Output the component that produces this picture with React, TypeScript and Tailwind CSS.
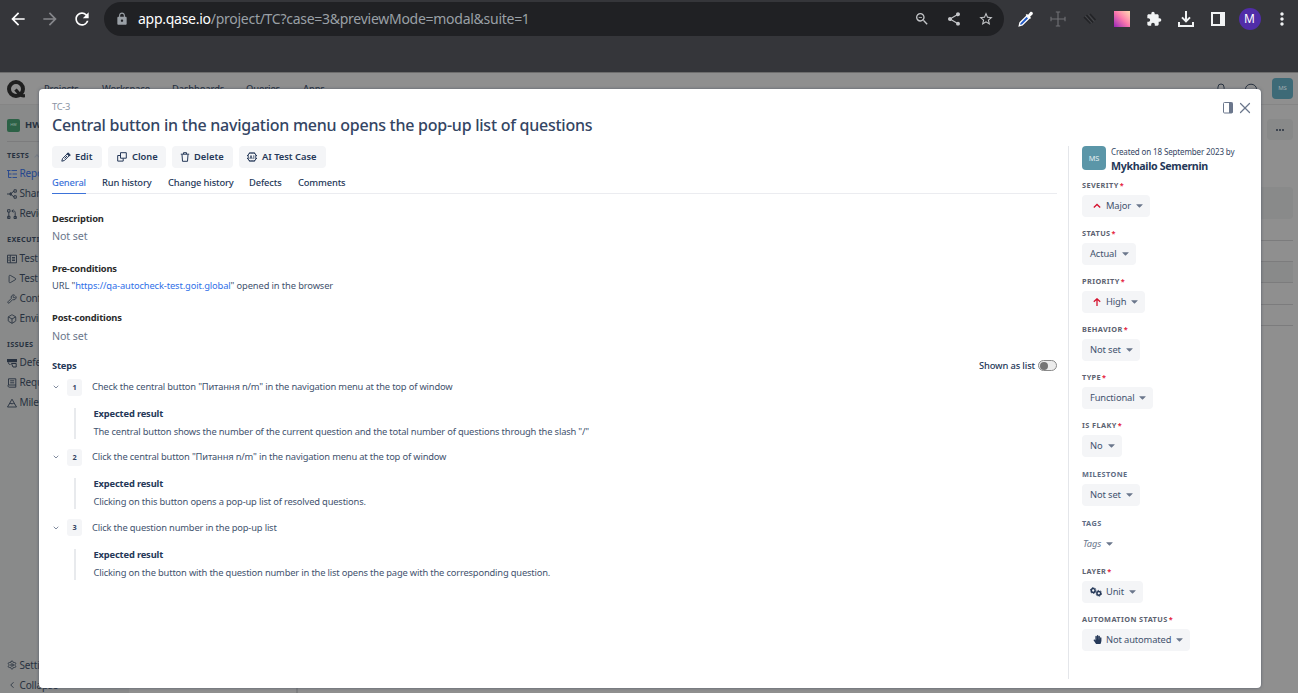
import React from "react";
import {
  MdArrowBack,
  MdArrowForward,
  MdRefresh,
  MdLock,
  MdZoomOut,
  MdShare,
  MdStarBorder,
  MdExtension,
  MdMoreVert,
} from "react-icons/md";
import { FaHandPaper, FaCaretDown } from "react-icons/fa";
import {
  Bell,
  Box,
  ChevronDown,
  ChevronLeft,
  Play,
  Settings,
  Wrench,
  X,
} from "lucide-react";

function BrowserBar() {
  return (
    <div className="flex h-[72px] items-start bg-[#35363a] pr-[5px] pl-2">
      <div className="flex h-[38px] w-[96px] shrink-0 items-center gap-3 text-white">
        <MdArrowBack className="size-5" />
        <MdArrowForward className="size-5 text-[#85868a]" />
        <MdRefresh className="size-5" />
      </div>
      <div className="mt-0.5 flex h-[34px] w-[900px] shrink-0 items-center rounded-full bg-[#202124] pr-2.5 pl-[11px] text-[#9aa0a6]">
        <MdLock className="size-3.5" />
        <span className="ml-[9px] text-[14px] leading-5 tracking-[-0.27px] whitespace-nowrap">
          <span className="text-white">app.qase.io</span>/project/TC?case=3&amp;previewMode=modal&amp;suite=1
        </span>
        <div className="ml-auto flex items-center gap-4 text-[#c4c6c9]">
          <MdZoomOut className="size-4" />
          <MdShare className="size-4" />
          <MdStarBorder className="size-4" />
        </div>
      </div>
      <div className="flex h-[38px] flex-1 items-center pl-[13px] text-[#f1f3f4]">
        <svg viewBox="0 0 18 18" className="size-[18px]">
          <path d="M2.2 15.8 3 12.7 9.6 6.1l2.3 2.3-6.6 6.6z" fill="#1d56c4" stroke="#fff" strokeWidth="1.3" />
          <path d="m8.6 4.9 1.2-1 1.3.9 2.2-2.7c1.3-1 3.2.6 2.4 2.1l-2.6 2.5.9 1.2-1.1 1.2z" fill="#fff" />
        </svg>
        <svg viewBox="0 0 16 16" className="ml-[14.5px] size-4" fill="none" stroke="#707175" strokeWidth="1.1">
          <path d="M8 1v14M1 8h14M5.8 1h4.4M5.8 15h4.4M1 5.8v4.4M15 5.8v4.4M6 8h4" />
        </svg>
        <svg viewBox="0 0 16 16" className="ml-4 size-4" fill="none" strokeWidth="1.5">
          <path d="m2 6 6.5 6.500M4.500 4 11 11.500M8 3l5.500 6" stroke="#222326" />
          <path d="m3.200 5 6.500 7M6.300 3.500l6 7" stroke="#4a4b4f" strokeWidth=".8" />
        </svg>
        <div className="ml-4 size-4 bg-linear-to-tr from-[#9a1bb5] via-[#fb77ac] to-[#ffd9b0]" />
        <MdExtension className="ml-4 size-4" />
        <svg viewBox="0 0 16 16" className="ml-4 size-4" fill="none" stroke="currentColor" strokeWidth="2">
          <path d="M8 0v10M4 6.4l4 4 4-4M1 11v4h14v-4" />
        </svg>
        <svg viewBox="0 0 14 14" className="ml-[17px] size-3.5" fill="none" stroke="currentColor" strokeWidth="2">
          <path d="M1 1h12v12H1zM10 1v12M11 1v12" />
        </svg>
        <div className="ml-3.5 flex size-[22px] items-center justify-center rounded-full bg-[#512da8] text-[12px] leading-none text-white">
          M
        </div>
        <MdMoreVert className="ml-[11px] size-5" />
      </div>
    </div>
  );
}

function AppHeader() {
  return (
    <div className="flex h-[33px] items-center border-t border-b border-t-[#6d6d6d] border-b-[#858585] bg-[#8f8f8f] pr-[5px] pl-[7px] text-[#27313f]">
      <svg viewBox="0 0 18 19" className="mt-0.5 h-[19px] w-[18px]" fill="none" stroke="#1f1f1f">
        <circle cx="9" cy="9" r="7" strokeWidth="4" />
        <path d="M8.5 9.5 12 13.5c1.500 2 3.500 2.500 6 2.200" strokeWidth="3.200" />
      </svg>
      <nav className="ml-[19px] flex items-center text-[9.33px] leading-4 font-medium tracking-[-0.12px]">
        <span className="w-[58px]">Projects</span>
        <span className="w-[70px]">Workspace</span>
        <span className="w-[74px]">Dashboards</span>
        <span className="w-[57px]">Queries</span>
        <span>Apps</span>
      </nav>
      <Bell className="ml-auto size-3" strokeWidth={2} />
      <svg viewBox="0 0 12 12" className="mr-[15px] ml-[18px] size-3" fill="none" stroke="currentColor">
        <ellipse cx="6" cy="6" rx="5.500" ry="4.800" />
      </svg>
      <div className="flex size-[21px] items-center justify-center rounded bg-[#3d6a77] text-[6px] text-[#a3adb0]">
        MS
      </div>
    </div>
  );
}

function NavItem({ icon, label, active }: { icon: React.ReactNode; label: string; active?: boolean }) {
  return (
    <div
      className={`flex h-5 items-center gap-[2.5px] text-[10px] tracking-[-0.15px] whitespace-nowrap ${active ? "text-[#24468e]" : "text-[#27313f]"}`}
    >
      <span className="w-2.5 shrink-0">{icon}</span>
      {label}
    </div>
  );
}

function NavHeading({ children, className }: { children: React.ReactNode; className: string }) {
  return (
    <div
      className={`flex h-4 items-center text-[7.33px] font-bold tracking-[0.3px] text-[#27313f] ${className}`}
    >
      {children}
    </div>
  );
}

function NavGlyph({ d }: { d: string }) {
  return (
    <svg viewBox="0 0 10 10" className="size-2.5" fill="none" stroke="currentColor" strokeWidth=".9">
      <path d={d} />
    </svg>
  );
}

function Sidebar() {
  const ic = "size-2.5";
  return (
    <aside className="flex w-[129px] shrink-0 flex-col bg-[#898a8a] pl-[7px]">
      <div className="mt-[10px] flex h-5 items-center gap-[5px] text-[9.33px] font-bold text-[#27313f]">
        <div className="flex size-[13px] items-center justify-center rounded-xs bg-[#2c6146] text-[4px] font-normal text-[#8fa69a]">
          HW
        </div>
        HW QA
      </div>
      <div className="mt-1.5 h-px bg-[#7c7c7d]" />
      <NavHeading className="mt-[5px]">
        TESTS
        <span className="mt-1 ml-1.5 size-1 rotate-45 border-t border-l border-[#777d86]" />
      </NavHeading>
      <div className="h-[0.5px]" />
      <NavItem
        active
        icon={<NavGlyph d="M0 1.500h3.500M4.500 1.500H10M1.500 1.500v7h3M1.500 5h3M5.500 5H10M5.500 8.500H10" />}
        label="Repository"
      />
      <NavItem
        icon={<NavGlyph d="M0 5h3.500M3.500 5 7 2M3.500 5 7 8M7 .8h2.300v2.400H7zM7 6.800h2.300v2.400H7zM3 3.900h1.200v2.200H3z" />}
        label="Shared Steps"
      />
      <NavItem
        icon={<NavGlyph d="M1.800 3v6M.6.700H3V3H.6zM.6 7.300H3v2.200H.6zM8.200 9.500V3.500c0-1-.5-1.500-1.500-1.500H5M6.300.500 4.800 2l1.500 1.500M7 7.500h2.400v2H7z" />}
        label="Review"
      />
      <NavHeading className="mt-2">EXECUTION</NavHeading>
      <div className="h-px" />
      <NavItem icon={<NavGlyph d="M.500 1.200h9v7.600h-9zM3.300 1.200v7.600M5 3.500h3M5 5h3M5 6.500h3M1.500 3.500h1M1.500 5h1M1.500 6.500h1" />} label="Test Plans" />
      <NavItem icon={<Play className={ic} />} label="Test Runs" />
      <NavItem icon={<Wrench className={ic} />} label="Configurations" />
      <NavItem icon={<Box className={ic} />} label="Environments" />
      <NavHeading className="mt-2">ISSUES</NavHeading>
      <NavItem
        icon={
          <svg viewBox="0 0 10 10" className={ic} fill="none" stroke="currentColor">
            <path d="M0 1h10v3.200H0z" fill="currentColor" stroke="none" />
            <path d="M1.500 4.500c0 1.500.5 2 2 2M4.500 5.500h4.700V9H6z" />
          </svg>
        }
        label="Defects"
      />
      <NavItem
        icon={<NavGlyph d="M1.500.800h7.300v8.400H2.200C1 9.200.6 7.300 1.500 7h7.300M1.500.800V7M3.200 2.800h4M3.200 4.800h4" />}
        label="Requirements"
      />
      <NavItem icon={<NavGlyph d="M5 1.200 9.500 9h-9zM2.700 6 4 5l1 1.200L6.200 5l1.200 1" />} label="Milestones" />
      <div className="mt-auto">
        <NavItem icon={<Settings className={ic} />} label="Settings" />
        <NavItem icon={<ChevronLeft className={ic} />} label="Collapse" />
      </div>
    </aside>
  );
}

function AppBody() {
  return (
    <div className="flex h-[588px] overflow-hidden bg-[#8f8f8f]">
      <div className="flex h-[590px]">
        <Sidebar />
        <div className="w-[169px] border-r-2 border-[#7e7f80]" />
      </div>
      <div className="flex-1 pt-3.5 pr-[5px]">
        <div className="ml-auto flex h-[21px] w-[26px] items-center justify-center gap-px rounded bg-[#888989]">
          <span className="size-0.5 rounded-full bg-[#27313f]" />
          <span className="size-0.5 rounded-full bg-[#27313f]" />
          <span className="size-0.5 rounded-full bg-[#27313f]" />
        </div>
        <div className="mt-[47px] h-8 rounded-r bg-[#898a8a]" />
        <div className="mt-[21px] h-[22px] border-y border-[#7c7c7d]" />
        <div className="h-[21px] border-b border-[#7c7c7d] bg-[#898a8a]" />
        <div className="h-[22px] border-b border-[#7c7c7d]" />
        <div className="h-[21px] border-b border-[#7c7c7d]" />
      </div>
    </div>
  );
}

function ActionButton({ icon, label, className }: { icon: React.ReactNode; label: string; className: string }) {
  return (
    <button
      className={`flex h-[22px] items-center rounded bg-[#f4f5f7] text-[9.33px] font-semibold text-[#253858] ${className}`}
    >
      {icon}
      {label}
    </button>
  );
}

function Tabs() {
  const tabs: [string, string][] = [
    ["Run history", "w-[50px]"],
    ["Change history", "w-[65px]"],
    ["Defects", "w-[33px]"],
    ["Comments", "w-[47px]"],
  ];
  return (
    <div className="mt-1 flex h-[22px] gap-4 border-b border-[#ebecf0] text-[9.33px] leading-[21px] font-medium tracking-[-0.14px] whitespace-nowrap text-[#253858]">
      <span className="h-[22px] w-[34px] border-b border-[#3d73d9] text-[#3d73d9]">General</span>
      {tabs.map(([label, w]) => (
        <span key={label} className={w}>
          {label}
        </span>
      ))}
    </div>
  );
}

function Heading({ children, className }: { children: React.ReactNode; className?: string }) {
  return (
    <h3 className={`h-4 text-[9.33px] leading-4 font-bold tracking-[-0.16px] ${className ?? ""}`}>{children}</h3>
  );
}

function Step({ n, action, result }: { n: number; action: string; result: string }) {
  return (
    <div className="h-[70.4px] text-[9.33px] tracking-[-0.165px] text-[#42526e]">
      <div className="flex h-[18px] items-center">
        <ChevronDown className="size-2" strokeWidth={2} />
        <span className="ml-[7px] flex h-[17px] w-[15px] items-center justify-center rounded-[3px] bg-[#f4f5f7] text-[7.33px] font-bold text-[#344563]">
          {n}
        </span>
        <span className="ml-[10px] whitespace-nowrap">{action}</span>
      </div>
      <div className="mt-[10px] ml-[22px] flex">
        <div className="mt-0.5 h-[31px] w-[1.500px] bg-[#e8eaed]" />
        <div className="ml-[18px]">
          <Heading className="text-[#253858]">Expected result</Heading>
          <p className="mt-px leading-[18px] whitespace-nowrap">{result}</p>
        </div>
      </div>
    </div>
  );
}

function Details() {
  return (
    <div className="w-[1005px] shrink-0">
      <div className="flex gap-1.5">
        <ActionButton
          className="w-[50px] gap-1 pl-[9px]"
          label="Edit"
          icon={
            <svg viewBox="0 0 10 10" className="size-2.5" fill="none" stroke="currentColor">
              <path d="M.8 9.200 1.500 6.600 6.800 1.300C7.500.600 9.400 2.400 8.700 3.200L3.400 8.500z" />
              <path d="m6 1.800 2.300 2.300L9 3.300 6.900 1z" fill="currentColor" />
              <path d="m6 4-2.500 2.500" />
            </svg>
          }
        />
        <ActionButton
          className="w-[58px] gap-[5px] pl-[9px]"
          label="Clone"
          icon={
            <svg viewBox="0 0 10 10" className="size-2.5" fill="none" stroke="currentColor">
              <path d="M3.500.700h5.800v5.500H3.500zM3.300 3.500H.700v5.600h5.500V6.400" />
            </svg>
          }
        />
        <ActionButton
          className="w-[61px] gap-1 pl-2"
          label="Delete"
          icon={
            <svg viewBox="0 0 10 10" className="size-2.5" fill="none" stroke="currentColor">
              <path d="M.8 2.200h8.400M3.500 2V.700h3V2M2 2.500l.5 6.800h5L8 2.500" />
            </svg>
          }
        />
        <ActionButton
          className="w-[87px] gap-[5px] pl-2"
          label="AI Test Case"
          icon={
            <svg viewBox="0 0 10 10" className="size-2.5" fill="none" stroke="currentColor">
              <rect x="1.200" y="1.200" width="7.600" height="7.600" rx="2" />
              <path d="M3 0v1M5 0v1M7 0v1M3 9v1M5 9v1M7 9v1M0 3.500h1M0 6.500h1M9 3.500h1M9 6.500h1" />
              <path d="m2.800 6.800 1.200-3.300 1.200 3.300M3.200 6h1.600M6.800 3.300v3.600" strokeWidth=".8" />
            </svg>
          }
        />
      </div>
      <Tabs />
      <Heading className="mt-[17px] text-[#2b2b2b]">Description</Heading>
      <p className="h-[18px] text-[10.67px] leading-[18px] tracking-[-0.09px] text-[#6b778c]">Not set</p>
      <Heading className="mt-4 text-[#2b2b2b]">Pre-conditions</Heading>
      <p className="h-[18px] text-[9.33px] leading-[18px] tracking-[-0.12px] text-[#42526e]">
        URL "<a className="text-[#2f6fe8]">https://qa-autocheck-test.goit.global</a>" opened in the browser
      </p>
      <Heading className="mt-[15px] text-[#2b2b2b]">Post-conditions</Heading>
      <p className="mt-px h-[18px] text-[10.67px] leading-[18px] tracking-[-0.09px] text-[#6b778c]">Not set</p>
      <div className="mt-[13px] flex h-4 items-center justify-between text-[#253858]">
        <Heading>Steps</Heading>
        <div className="flex items-center gap-[3px] text-[9.33px] leading-4 font-medium tracking-[-0.13px]">
          Shown as list
          <span className="-mt-px flex h-[11px] w-[19px] items-center rounded-full border border-[#8a8a8a] bg-[#ececec] pl-px">
            <span className="size-2 rounded-full bg-[#757575]" />
          </span>
        </div>
      </div>
      <div className="mt-1">
        <Step
          n={1}
          action={'Check the central button "Питання n/m" in the navigation menu at the top of window'}
          result={
            'The central button shows the number of the current question and the total number of questions through the slash "/"'
          }
        />
        <Step
          n={2}
          action={'Click the central button "Питання n/m" in the navigation menu at the top of window'}
          result="Clicking on this button opens a pop-up list of resolved questions."
        />
        <Step
          n={3}
          action="Click the question number in the pop-up list"
          result="Clicking on the button with the question number in the list opens the page with the corresponding question."
        />
      </div>
    </div>
  );
}

type FieldProps = {
  label: string;
  value: string;
  className: string;
  required?: boolean;
  icon?: React.ReactNode;
};

function Field({ label, value, className, required, icon }: FieldProps) {
  const plain = value === "Tags";
  return (
    <div className={className}>
      <div
        className={`h-3 text-[7.33px] leading-3 font-bold tracking-[0.4px] whitespace-nowrap ${required ? "text-[#5c6270]" : "text-[#5e6c84]"}`}
      >
        {label}
        {required && <span className="ml-px text-[#e5243f]">*</span>}
      </div>
      <div
        className={`mt-[3.500px] flex h-[22px] w-fit items-center rounded text-[9.33px] tracking-[-0.12px] whitespace-nowrap ${plain ? "pl-px text-[#6b778c] italic" : "bg-[#f4f5f7] pr-[5px] pl-2 text-[#42526e]"}`}
      >
        {icon && <span className="mr-1 flex w-3 justify-end">{icon}</span>}
        {value}
        <FaCaretDown className="ml-[3px] size-[11px] text-[#6b778c]" />
      </div>
    </div>
  );
}

function Properties() {
  return (
    <div className="ml-[11px] h-[533px] w-[190px] border-l-[1.500px] border-[#e4e6ea] pl-[13px]">
      <div className="flex">
        <div className="flex size-6 shrink-0 items-center justify-center rounded bg-[#5b96a8] text-[7.33px] text-[#e3eef1]">
          MS
        </div>
        <div className="ml-[5px] whitespace-nowrap">
          <div className="h-[11px] text-[8px] leading-[11px] tracking-[-0.13px] text-[#344563]">
            Created on 18 September 2023 by
          </div>
          <div className="mt-px h-[17px] text-[10.67px] leading-4 font-bold tracking-[-0.34px] text-[#253858]">
            Mykhailo Semernin
          </div>
        </div>
      </div>
      <Field
        className="mt-1 h-12"
        label="SEVERITY"
        value="Major"
        required
        icon={
          <svg viewBox="0 0 8 8" className="mr-px size-2" fill="none" stroke="#d5122e" strokeWidth="1.300">
            <path d="m.8 5.500 3.200-3 3.200 3" />
          </svg>
        }
      />
      <Field className="h-12" label="STATUS" value="Actual" required />
      <Field
        className="h-12"
        label="PRIORITY"
        value="High"
        required
        icon={
          <svg viewBox="0 0 8 8" className="mr-px size-2" fill="none" stroke="#d5122e" strokeWidth="1.300">
            <path d="M4 8V.8M.8 3.800 4 .800l3.200 3" />
          </svg>
        }
      />
      <Field className="h-12" label="BEHAVIOR" value="Not set" required />
      <Field className="h-12" label="TYPE" value="Functional" required />
      <Field className="h-[49px]" label="IS FLAKY" value="No" required />
      <Field className="h-[49px]" label="MILESTONE" value="Not set" />
      <Field className="h-12" label="TAGS" value="Tags" />
      <Field
        className="h-12"
        label="LAYER"
        value="Unit"
        required
        icon={
          <svg viewBox="0 0 12 10" className="h-2.5 w-3 text-[#253858]" fill="none" stroke="currentColor">
            <circle cx="3.200" cy="3.500" r="1.900" strokeWidth="1.500" />
            <circle cx="3.200" cy="3.500" r="2.900" strokeWidth=".9" strokeDasharray="1.500 1.500" />
            <circle cx="8.800" cy="6.300" r="1.900" strokeWidth="1.500" />
            <circle cx="8.800" cy="6.300" r="2.900" strokeWidth=".9" strokeDasharray="1.500 1.500" />
          </svg>
        }
      />
      <Field
        className="h-12"
        label="AUTOMATION STATUS"
        value="Not automated"
        required
        icon={<FaHandPaper className="size-[9px] text-[#253858]" />}
      />
    </div>
  );
}

function Modal() {
  return (
    <div
      role="dialog"
      className="absolute top-[89px] left-[39px] h-[599px] w-[1222px] rounded bg-white pl-[13px] shadow-[0_0_3px_rgba(60,70,90,0.7)]"
    >
      <div className="flex h-[57px] justify-between pr-[7px]">
        <div>
          <div className="mt-[10px] h-4 text-[9.33px] leading-4 tracking-[-0.31px] text-[#8993a4]">TC-3</div>
          <h2 className="h-5 text-[16px] leading-5 font-medium tracking-[-0.25px] text-[#344563]">
            Central button in the navigation menu opens the pop-up list of questions
          </h2>
        </div>
        <div className="mt-[13px] flex h-3 items-center gap-[3px] text-[#6b778c]">
          <svg viewBox="0 0 10 12" className="h-3 w-2.5">
            <rect x=".5" y=".5" width="9" height="10.500" rx="1" fill="none" stroke="currentColor" />
            <path d="M6 .5h3.500V11H6z" fill="currentColor" />
          </svg>
          <X className="size-[18px]" strokeWidth={1.6} />
        </div>
      </div>
      <div className="flex">
        <Details />
        <Properties />
      </div>
    </div>
  );
}

export default function App() {
  return (
    <div className="relative h-[693px] w-[1298px] overflow-hidden font-['Noto_Sans',sans-serif]">
      <BrowserBar />
      <AppHeader />
      <AppBody />
      <Modal />
    </div>
  );
}
